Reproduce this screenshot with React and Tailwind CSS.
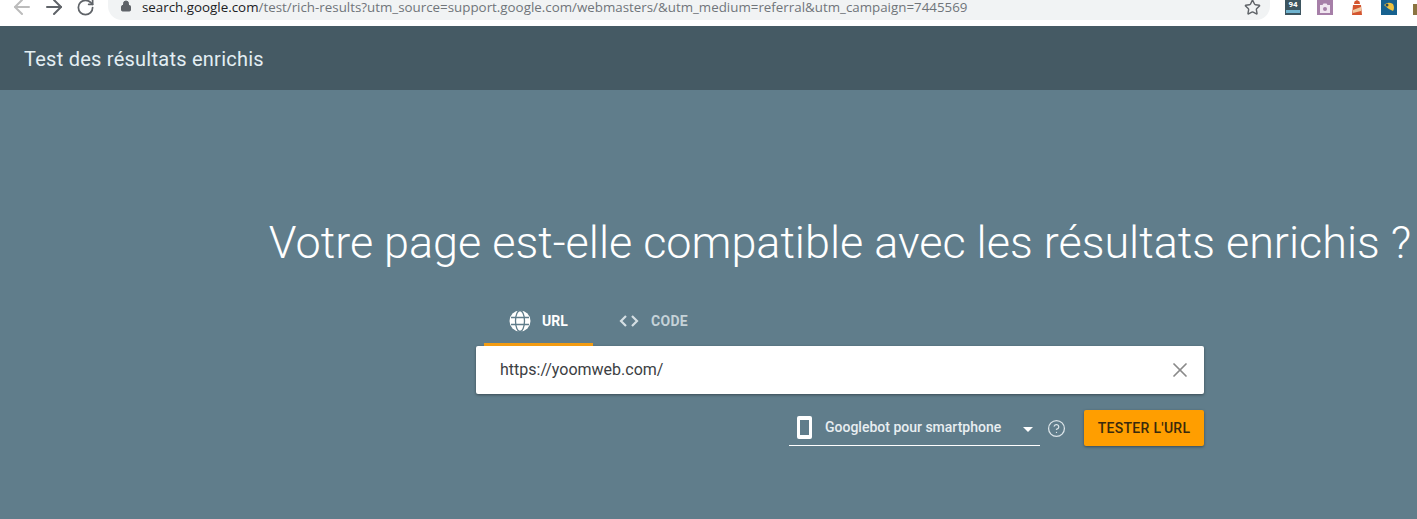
import { ArrowLeft, ArrowRight, RotateCw, Lock, Star, HelpCircle, X } from 'lucide-react'

function GlobeIcon() {
  return (
    <svg width="22" height="22" viewBox="0 0 22 22" fill="none" stroke="#607d8b" strokeWidth="1.3">
      <circle cx="11" cy="11" r="10.5" fill="#fff" stroke="none" />
      <path d="M2 7.5h18M2 14.5h18" />
      <ellipse cx="11" cy="11" rx="4.5" ry="10.5" />
    </svg>
  )
}

function CodeIcon() {
  return (
    <svg width="20" height="12" viewBox="0 0 20 12" fill="none" stroke="#d5dfe3" strokeWidth="2.2">
      <path d="M7 1 L2 6 L7 11" />
      <path d="M13 1 L18 6 L13 11" />
    </svg>
  )
}

function Extensions() {
  return (
    <div className="flex items-start gap-[16px] h-[15px] flex-1 pl-[15px] overflow-hidden">
      <div className="w-[16px] h-[15px] bg-[#3d5560] flex flex-col items-center shrink-0">
        <span className="text-[8px] leading-[10px] font-bold text-white">94</span>
        <div className="w-[14px] h-[3px] bg-[#6fb3cf]" />
      </div>
      <div className="w-[16px] h-[15px] bg-[#a67fa8] flex items-center justify-center shrink-0">
        <svg width="12" height="10" viewBox="0 0 12 10">
          <path d="M1 2 H3.5 L4.5 0.5 H7.5 L8.5 2 H11 V10 H1 Z" fill="#f0e6f0" />
          <circle cx="6" cy="6" r="2" fill="#a67fa8" />
        </svg>
      </div>
      <svg className="shrink-0" width="16" height="15" viewBox="0 0 16 15">
        <path d="M5 4 L5.5 1.5 L8 0 L10.5 1.5 L11 4 Z" fill="#d4552f" />
        <path d="M4 5 H12 L13 15 H3 Z" fill="#d4552f" />
        <path d="M4 10 L12 7 L12 11 L4 13 Z" fill="#efc9a0" />
      </svg>
      <div className="w-[16px] h-[15px] bg-[#17618f] flex items-center justify-center shrink-0">
        <svg width="12" height="11" viewBox="0 0 12 11">
          <path d="M1 3 Q5 -1 10 2 Q12 6 10 9 Q5 7 1 3 Z" fill="#efc23f" />
          <circle cx="4" cy="3" r="1.5" fill="#27485c" />
        </svg>
      </div>
      <div className="w-[16px] h-[15px] shrink-0 flex items-end">
        <div className="w-[5px] h-[11px] bg-[#8a7440]" />
      </div>
    </div>
  )
}

export default function App() {
  return (
    <div className="h-[519px] w-[1417px] overflow-hidden bg-[#607d8b] font-['Roboto',sans-serif]">
      <div className="h-[26px] bg-white flex items-start">
        <div className="w-[108px] flex items-center pl-[10px] h-[14px] shrink-0">
          <ArrowLeft size={24} className="text-[#bcbcbc] shrink-0" strokeWidth={2} />
          <ArrowRight size={24} className="ml-[8px] text-[#5f6368] shrink-0" strokeWidth={2} />
          <RotateCw size={19} className="ml-[10px] text-[#5f6368] shrink-0" strokeWidth={2.2} />
        </div>
        <div className="w-[1162px] h-[20px] bg-[#f1f3f4] rounded-br-[14px] rounded-bl-[14px] flex items-start pl-[12px] pr-[9px] shrink-0">
          <Lock size={12} className="text-[#5f6368] shrink-0 fill-[#5f6368]" />
          <span className="ml-[10px] text-[13.35px] leading-[14px] text-[#70757a] whitespace-nowrap font-['Open_Sans',sans-serif]">
            <span className="text-[#202124]">search.google.com</span>/test/rich-results?utm_source=support.google.com/webmasters/&utm_medium=referral&utm_campaign=7445569
          </span>
          <Star size={17} className="ml-auto -mt-[1px] text-[#5f6368] shrink-0" strokeWidth={2} />
        </div>
        <Extensions />
      </div>

      <header className="h-[64px] bg-[#455a64] flex items-center pt-[2px] px-[24px] text-[20px] tracking-[0.25px] text-[#e3eef3]">
        Test des résultats enrichis
      </header>

      <main className="pl-[263px] flex flex-col items-center">
        <h1 className="mt-[124px] text-[44.95px] leading-[58px] font-light text-white whitespace-nowrap">
          Votre page est-elle compatible avec les résultats enrichis ?
        </h1>

        <div className="w-[728px] mt-[27px]">
          <div className="flex pl-[8px] h-[47px]">
            <div className="w-[109px] flex items-center justify-center gap-[11px] border-b-[3px] border-[#f39c12] text-[14px] font-bold text-white">
              <GlobeIcon />
              URL
            </div>
            <div className="w-[122px] pl-[26px] flex items-center gap-[12px] border-b-[3px] border-transparent text-[14px] font-bold tracking-[0.3px] text-[#c5d2d8]">
              <CodeIcon />
              CODE
            </div>
          </div>
          <div className="h-[48px] bg-white rounded-[2px] shadow-[0_1px_3px_rgba(0,0,0,0.4)] flex items-center pl-[24px] pr-[12px]">
            <span className="text-[16px] text-[#3c4043]">https://yoomweb.com/</span>
            <X size={24} className="ml-auto text-[#8a8a8a]" strokeWidth={1.7} />
          </div>
          <div className="flex justify-end items-start mt-[16px]">
            <div className="w-[251px] h-[36px] border-b border-white flex items-center text-[14px] font-medium text-[#e8eef1] pl-[8px]">
              <div className="w-[15px] h-[23px] bg-white rounded-[2px] px-[3px] py-[4px] shrink-0">
                <div className="w-full h-full bg-[#607d8b]" />
              </div>
              <span className="ml-[13px] whitespace-nowrap">Googlebot pour smartphone</span>
              <div className="ml-auto mr-[7px] mt-[4px] border-x-[5px] border-x-transparent border-t-[5px] border-t-white" />
            </div>
            <HelpCircle size={19} className="ml-[7px] mt-[9px] text-[#dbe4e8]" strokeWidth={1.6} />
            <button className="ml-[18px] w-[120px] h-[36px] bg-[#ff9e00] rounded-[2px] shadow-[0_1px_3px_rgba(0,0,0,0.4)] text-[14px] font-medium tracking-[0.3px] text-[#3a2a0c]">
              TESTER L'URL
            </button>
          </div>
        </div>
      </main>
    </div>
  )
}
